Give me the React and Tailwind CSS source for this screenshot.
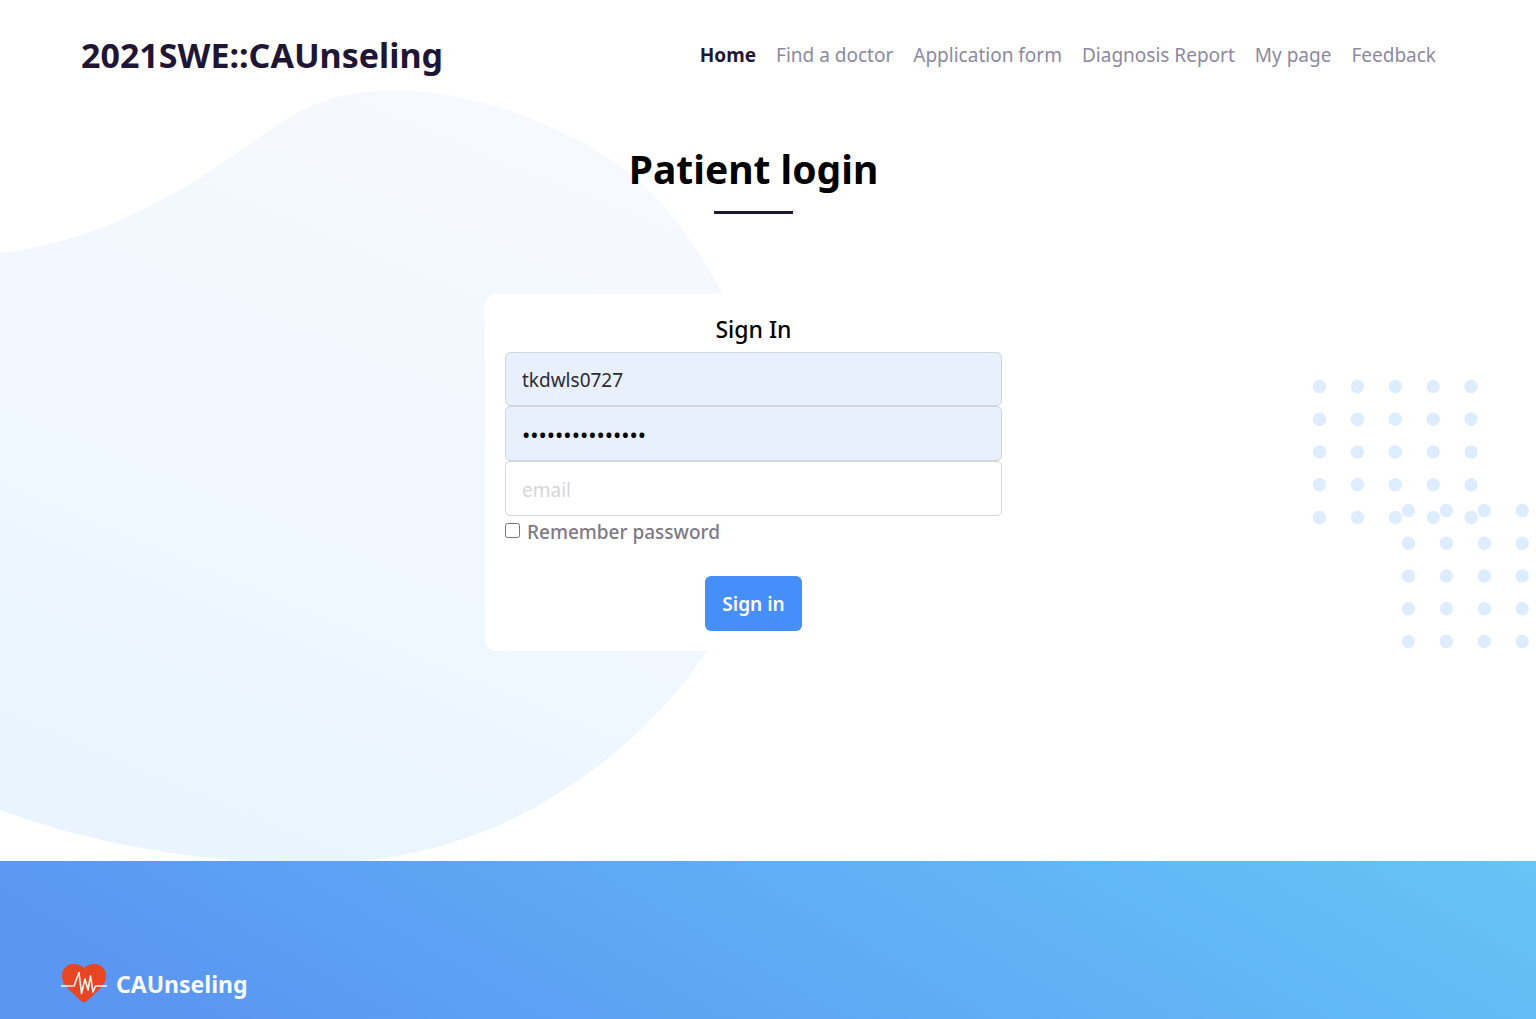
const links = ["Find a doctor", "Application form", "Diagnosis Report", "My page", "Feedback"];

function Blob() {
  return (
    <svg className="pointer-events-none absolute top-0 left-0" width="800" height="862" viewBox="0 0 800 862" fill="none" aria-hidden="true">
      <defs>
        <linearGradient id="blobFill" x1="480" y1="90" x2="160" y2="861" gradientUnits="userSpaceOnUse">
          <stop offset="0" stopColor="#f6f9ff" />
          <stop offset="0.3" stopColor="#f3f8ff" />
          <stop offset="0.6" stopColor="#eff7ff" />
          <stop offset="1" stopColor="#e9f4ff" />
        </linearGradient>
      </defs>
      <path
        d="M0 253C54 247 104 229 148 207C195 183 235 155 275 126C312 101 350 90 400 90.500C470 92 540 117 600 153C655 187 692 236 722 293C780 402 775 540 707 651C668 710 615 758 560 792C505 828 435 855 350 862H255C160 855 80 839 0 810Z"
        fill="url(#blobFill)"
      />
    </svg>
  );
}

function DotGrid({ className }) {
  const steps = [0, 1, 2, 3, 4];
  return (
    <svg className={className} width="166" height="146" viewBox="0 0 166 146" aria-hidden="true">
      {steps.map((row) =>
        steps.map((col) => (
          <circle key={`${row}-${col}`} cx={6.5 + col * 37.9} cy={7.5 + row * 32.75} r="6.7" fill="#deecff" />
        ))
      )}
    </svg>
  );
}

function HeartLogo() {
  return (
    <svg width="46" height="40" viewBox="0 0 46 40" fill="none" aria-hidden="true">
      <path
        d="M23 4C19.500 0.500 16 0 12.500 0C5.500 0 1 5 1 12C1 17 3.500 21 7 24.500L20 37C22 38.800 24 38.800 26 37L39 24.500C42.500 21 45 17 45 12C45 5 40.500 0 33.500 0C30 0 26.500 0.500 23 4Z"
        fill="#e84522"
      />
      <path
        d="M0 22H13L18 8.500L20.500 29.500L24 15L27 26L29.500 12L32 28L34.500 22H46"
        stroke="#fff3ee"
        strokeWidth="1.600"
        strokeLinejoin="round"
      />
    </svg>
  );
}

const field = "w-full rounded-[5px] border border-[#d5d5da] px-4 outline-none placeholder:text-[#d6d6da]";

export default function App() {
  return (
    <div className="relative flex min-h-screen flex-col overflow-hidden bg-white font-['Noto_Sans','Open_Sans',sans-serif] text-[#1f1635]">
      <Blob />
      <div className="pointer-events-none absolute top-[379px] right-0 h-[280px] w-[223px] overflow-hidden">
        <DotGrid className="absolute top-0 left-0" />
        <DotGrid className="absolute top-[124px] left-[89px]" />
      </div>

      <header className="relative flex h-[110px] items-center justify-between pr-[100px] pl-[81px]">
        <a href="#home" className="text-[34px] font-bold">2021SWE::CAUnseling</a>
        <nav className="flex gap-5 text-[19px] text-[#8b89a2]">
          <a href="#home" className="font-bold text-[#1f1635]">Home</a>
          {links.map((label) => (
            <a key={label} href="#" className="font-normal">{label}</a>
          ))}
        </nav>
      </header>

      <main className="relative flex flex-col items-center pt-[29px] pr-[29px] pb-[210px]">
        <h1 className="text-[39px] leading-[60px] font-bold text-black">Patient login</h1>
        <div className="mt-3 h-[3px] w-[79px] bg-[#1f1635]" />

        <form className="mt-20 flex w-[537px] max-w-full flex-col rounded-xl bg-white p-5" onSubmit={(e) => e.preventDefault()}>
          <h2 className="mb-2 text-center text-[23px] leading-[30px] font-medium text-black">Sign In</h2>
          <input type="text" aria-label="ID" defaultValue="tkdwls0727" className={`${field} h-[54px] bg-[#e8effd] pt-0.5 text-[19px] text-[#2b2b33]`} />
          <input type="password" aria-label="Password" defaultValue="password1234567" className={`${field} h-[55px] bg-[#e8effd] text-[22px] text-black`} />
          <input type="email" aria-label="Email" placeholder="email" className={`${field} h-[55px] bg-white pt-0.5 text-[19px] text-[#2b2b33]`} />
          <label className="flex items-start gap-[7px] text-[19px] leading-8 font-medium text-[#7d7987]">
            <input type="checkbox" className="mt-[7px] size-[15px]" />
            Remember password
          </label>
          <button type="submit" className="mt-7 h-[55px] self-center rounded-md bg-[#468ef9] px-[17px] pt-0.5 text-[19px] font-semibold text-white">
            Sign in
          </button>
        </form>
      </main>

      <footer className="relative grow bg-linear-30 from-[#5a96f2] from-10% to-[#66c4f6] pt-[103px] pb-3 pl-[61px]">
        <a href="#home" className="flex items-center gap-[9px] text-[23px] leading-10 font-bold text-[#f8faff]">
          <HeartLogo />
          CAUnseling
        </a>
      </footer>
    </div>
  );
}
